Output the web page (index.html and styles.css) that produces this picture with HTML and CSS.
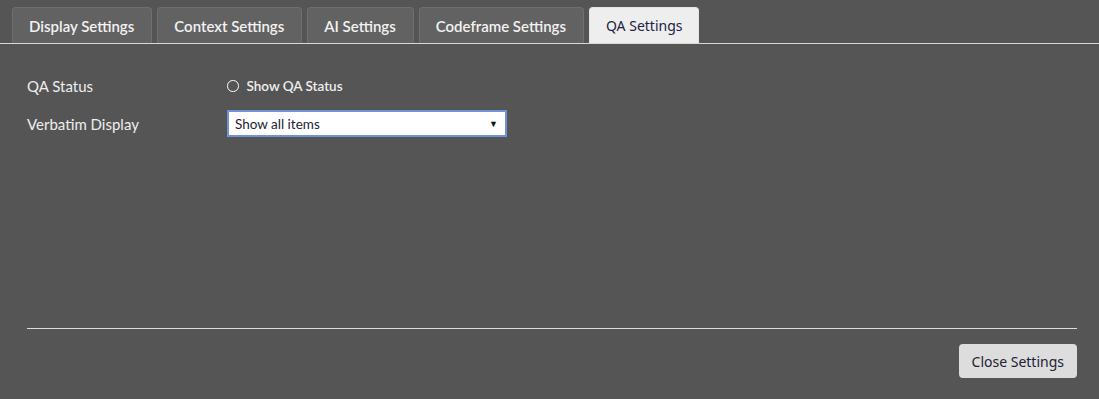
FILE: index.html
```html
<!DOCTYPE html>
<html lang="en">
<head>
    <meta charset="UTF-8">
    <title>Settings</title>
    <link rel="stylesheet" href="styles.css">
</head>
<body>
    <div class="tabs">
        <div class="tab">Display Settings</div>
        <div class="tab">Context Settings</div>
        <div class="tab">AI Settings</div>
        <div class="tab">Codeframe Settings</div>
        <div class="tab active">QA Settings</div>
    </div>

    <div class="panel">
        <div class="row">
            <div class="label">QA Status</div>
            <label class="radio">
                <span class="circle"></span>
                <span>Show QA Status</span>
            </label>
        </div>
        <div class="row">
            <div class="label">Verbatim Display</div>
            <div class="select">
                <span>Show all items</span>
                <span class="arrow">&#9660;</span>
            </div>
        </div>
    </div>

    <div class="footer">
        <button class="close-btn">Close Settings</button>
    </div>
</body>
</html>
```

FILE: styles.css
```css
body {
    margin: 0;
    background-color: #555555;
    font-family: Lato, "Noto Sans", sans-serif;
    color: #eeeeee;
    height: 399px;
    display: flex;
    flex-direction: column;
}

.tabs {
    display: flex;
    gap: 5px;
    padding: 7px 0 0 12px;
    border-bottom: 1px solid #d8d8d8;
}

.tab {
    height: 36px;
    box-sizing: border-box;
    padding: 0 17px 0 16px;
    display: flex;
    align-items: center;
    background-color: #626262;
    border: 1px solid #6f6f6f;
    border-bottom: none;
    border-radius: 4px 4px 0 0;
    font-size: 15px;
    font-weight: 600;
    color: #f2f2f2;
}

.tab.active {
    background-color: #eeeeee;
    border-color: #e4e4e4;
    color: #222244;
    font-family: "Noto Sans", sans-serif;
    font-weight: 400;
    font-size: 14px;
    padding: 0 16px;
}

.panel {
    flex: 1;
    padding: 33px 27px 0;
    display: flex;
    flex-direction: column;
    gap: 15px;
}

.row {
    display: flex;
    align-items: center;
}

.label {
    width: 200px;
    font-size: 15px;
}

.radio {
    display: flex;
    align-items: center;
    gap: 8px;
    font-size: 13.5px;
    font-weight: 600;
}

.circle {
    width: 9.5px;
    height: 9.5px;
    border: 1.5px solid #ffffff;
    border-radius: 50%;
}

.select {
    width: 280px;
    height: 27px;
    box-sizing: border-box;
    background-color: #ffffff;
    border: 2px solid #6f93d6;
    display: flex;
    align-items: center;
    justify-content: space-between;
    padding: 0 7px 0 6px;
    font-size: 13.5px;
    color: #222233;
}

.arrow {
    font-size: 9px;
    color: #111111;
}

.footer {
    margin: 0 22px 21px 27px;
    border-top: 1px solid #dddddd;
    padding-top: 15px;
    display: flex;
    justify-content: flex-end;
}

.close-btn {
    height: 34px;
    padding: 0 13px;
    background-color: #dddddd;
    border: none;
    border-radius: 4px;
    font-family: "Noto Sans", sans-serif;
    font-size: 14px;
    color: #222233;
}
```
